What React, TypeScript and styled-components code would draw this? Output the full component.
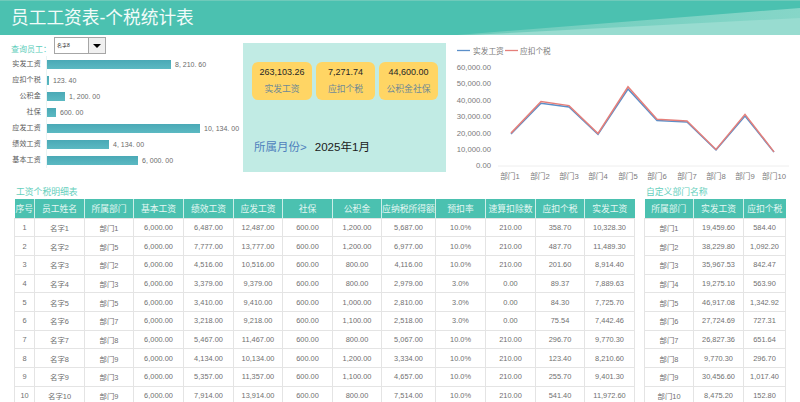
import * as React from "react";
import { createGlobalStyle, styled } from "styled-components";

const GlobalStyle = createGlobalStyle`
  html, body {
    margin: 0;
    height: 402px;
    overflow: hidden;
    background: #fff;
  }
  body {
    font-family: "Liberation Sans", "Noto Sans CJK SC", sans-serif;
  }
`;

const cjk = `"Liberation Sans", "Noto Sans CJK SC", sans-serif`;

const barRows = [
  { label: "实发工资", value: "8, 210. 60", width: 124 },
  { label: "应扣个税", value: "123. 40", width: 2 },
  { label: "公积金", value: "1, 200. 00", width: 18 },
  { label: "社保", value: "600. 00", width: 9 },
  { label: "应发工资", value: "10, 134. 00", width: 153 },
  { label: "绩效工资", value: "4, 134. 00", width: 62 },
  { label: "基本工资", value: "6, 000. 00", width: 91 },
];

const kpis = [
  { value: "263,103.26", label: "实发工资", width: 60 },
  { value: "7,271.74", label: "应扣个税", width: 59 },
  { value: "44,600.00", label: "公积金社保", width: 59 },
];

const mainColumns = [20, 50, 49, 50, 50, 49, 50, 49, 54, 50, 50, 49, 50];
const mainHead = [
  "序号", "员工姓名", "所属部门", "基本工资", "绩效工资", "应发工资", "社保",
  "公积金", "应纳税所得额", "预扣率", "速算扣除数", "应扣个税", "实发工资",
];
const mainRows = [
  ["1", "名字1", "部门1", "6,000.00", "6,487.00", "12,487.00", "600.00", "1,200.00", "5,687.00", "10.0%", "210.00", "358.70", "10,328.30"],
  ["2", "名字2", "部门5", "6,000.00", "7,777.00", "13,777.00", "600.00", "1,200.00", "6,977.00", "10.0%", "210.00", "487.70", "11,489.30"],
  ["3", "名字3", "部门2", "6,000.00", "4,516.00", "10,516.00", "600.00", "800.00", "4,116.00", "10.0%", "210.00", "201.60", "8,914.40"],
  ["4", "名字4", "部门3", "6,000.00", "3,379.00", "9,379.00", "600.00", "800.00", "2,979.00", "3.0%", "0.00", "89.37", "7,889.63"],
  ["5", "名字5", "部门5", "6,000.00", "3,410.00", "9,410.00", "600.00", "1,000.00", "2,810.00", "3.0%", "0.00", "84.30", "7,725.70"],
  ["6", "名字6", "部门7", "6,000.00", "3,218.00", "9,218.00", "600.00", "1,100.00", "2,518.00", "3.0%", "0.00", "75.54", "7,442.46"],
  ["7", "名字7", "部门8", "6,000.00", "5,467.00", "11,467.00", "600.00", "800.00", "5,067.00", "10.0%", "210.00", "296.70", "9,770.30"],
  ["8", "名字8", "部门9", "6,000.00", "4,134.00", "10,134.00", "600.00", "1,200.00", "3,334.00", "10.0%", "210.00", "123.40", "8,210.60"],
  ["9", "名字9", "部门3", "6,000.00", "5,357.00", "11,357.00", "600.00", "1,100.00", "4,657.00", "10.0%", "210.00", "255.70", "9,401.30"],
  ["10", "名字10", "部门9", "6,000.00", "7,914.00", "13,914.00", "600.00", "800.00", "7,514.00", "10.0%", "210.00", "541.40", "11,972.60"],
];

const deptColumns = [49, 50, 42];
const deptHead = ["所属部门", "实发工资", "应扣个税"];
const deptRows = [
  ["部门1", "19,459.60", "584.40"],
  ["部门2", "38,229.80", "1,092.20"],
  ["部门3", "35,967.53", "842.47"],
  ["部门4", "19,275.10", "563.90"],
  ["部门5", "46,917.08", "1,342.92"],
  ["部门6", "27,724.69", "727.31"],
  ["部门7", "26,827.36", "651.64"],
  ["部门8", "9,770.30", "296.70"],
  ["部门9", "30,456.60", "1,017.40"],
  ["部门10", "8,475.20", "152.80"],
];

const Page = styled.div`
  width: 800px;
  height: 402px;
  overflow: hidden;
  display: flex;
  flex-direction: column;
  background: #fff;
`;

const Banner = styled.header`
  position: relative;
  flex: 0 0 35px;
  box-sizing: border-box;
  display: flex;
  align-items: center;
  padding: 2px 0 0 11px;
  background: #4bc1b0;
  overflow: hidden;
`;

const BannerWedge = styled.svg`
  position: absolute;
  inset: 0;
  width: 100%;
  height: 100%;
`;

const BannerTitle = styled.h1`
  position: relative;
  margin: 0;
  font-size: 17.7px;
  font-weight: 400;
  line-height: 1;
  color: #f2fbf9;
`;

const TopRow = styled.div`
  flex: 0 0 150px;
  display: flex;
`;

const BarPanel = styled.section`
  flex: 0 0 243px;
  box-sizing: border-box;
  padding: 2px 0 0 11px;
`;

const QueryRow = styled.div`
  display: flex;
  align-items: center;
  height: 17px;
`;

const QueryLabel = styled.span`
  width: 43px;
  margin-top: 5px;
  font-size: 8px;
  color: #5ccdbb;
`;

const SelectBox = styled.div`
  width: 52px;
  height: 17px;
  display: flex;
  border: 1px solid #a6a6a6;
  box-sizing: border-box;
`;

const SelectValue = styled.span`
  flex: 1;
  padding-left: 2px;
  font-size: 5px;
  line-height: 15px;
  color: #222;
`;

const SelectButton = styled.span`
  width: 16px;
  display: flex;
  align-items: center;
  justify-content: center;
  border-left: 1px solid #a6a6a6;
  background: #f0f0f0;
`;

const SelectArrow = styled.span`
  width: 0;
  height: 0;
  border-style: solid;
  border-width: 4px 4px 0;
  border-color: #000 transparent transparent;
`;

const BarList = styled.div`
  display: grid;
  grid-template-columns: 30px 1fr;
  grid-auto-rows: 16px;
  margin-top: 2px;
`;

const BarLabel = styled.span`
  font-size: 7px;
  line-height: 16px;
  color: #595959;
  text-align: right;
  letter-spacing: 0.2px;
`;

const BarTrack = styled.div`
  display: flex;
  align-items: center;
  gap: 4px;
  margin-left: 5px;
  border-left: 1px solid #eaf4f4;
`;

const BarFill = styled.div`
  height: 9px;
  background: linear-gradient(180deg, #4aa9b6, #5bb9c2);
`;

const BarValue = styled.span`
  font-size: 7px;
  color: #6b6b6b;
  white-space: pre;
`;

const KpiPanel = styled.section`
  flex: 0 0 203px;
  height: 129px;
  margin-top: 8px;
  box-sizing: border-box;
  padding: 19px 8px 0 9px;
  display: flex;
  flex-direction: column;
  background: #c1ebe4;
`;

const KpiRow = styled.div`
  display: flex;
  gap: 4px;
`;

const KpiCard = styled.div<{ $width: number }>`
  width: ${(p) => p.$width}px;
  height: 38px;
  box-sizing: border-box;
  padding-bottom: 2px;
  border-radius: 6px;
  background: #ffd564;
  display: flex;
  flex-direction: column;
  align-items: center;
  justify-content: center;
  gap: 7px;
`;

const KpiValue = styled.span`
  font-size: 9px;
  line-height: 10px;
  color: #262626;
`;

const KpiLabel = styled.span`
  font-size: 8.8px;
  line-height: 10px;
  color: #6f8a96;
`;

const MonthRow = styled.div`
  margin-top: 38px;
  display: flex;
  align-items: center;
  gap: 8px;
  padding-left: 2px;
`;

const MonthLabel = styled.span`
  font-size: 11.5px;
  color: #4f81bd;
`;

const MonthValue = styled.span`
  font-size: 11.6px;
  color: #1a1a1a;
`;

const ChartPanel = styled.section`
  flex: 1;
  min-width: 0;
`;

const ChartSvg = styled.svg`
  display: block;
  width: 354px;
  height: 150px;
`;

const ChartText = styled.text`
  font-family: ${cjk};
  font-size: 7.7px;
  fill: #7a7a7a;
`;

const TablesRow = styled.div`
  flex: 1;
  display: flex;
  padding-left: 14px;
  min-height: 0;
`;

const TableBlock = styled.section<{ $gap?: number }>`
  margin-left: ${(p) => p.$gap ?? 0}px;
`;

const TableCaption = styled.div`
  height: 14px;
  padding-left: 2px;
  font-size: 8.8px;
  line-height: 14px;
  color: #66cfbd;
`;

const DataTable = styled.table`
  border-collapse: collapse;
  table-layout: fixed;
`;

const HeadCell = styled.th`
  height: 19px;
  padding: 0;
  box-sizing: border-box;
  border-left: 1px solid #cdeee8;
  background: #4bc1b0;
  color: #e4f7f3;
  font-size: 8.8px;
  font-weight: 400;
  text-align: center;
  white-space: nowrap;
  overflow: hidden;
  &:first-child {
    border-left: 0;
  }
`;

const BodyCell = styled.td`
  height: 18.7px;
  padding: 0;
  box-sizing: border-box;
  border: 1px solid #e4e4e4;
  color: #707070;
  font-size: 7.4px;
  text-align: center;
  white-space: nowrap;
`;

// chart drawn in panel coordinates: the panel starts at x=446, y=35
const chartX = [65, 95, 123, 152, 182, 211, 241, 270, 299, 328];
const labelX = [64, 94, 123, 152, 182, 211, 241, 270, 299, 328];
const wages = [19459.6, 38229.8, 35967.53, 19275.1, 46917.08, 27724.69, 26827.36, 9770.3, 30456.6, 8475.2];
const taxes = [584.4, 1092.2, 842.47, 563.9, 1342.92, 727.31, 651.64, 296.7, 1017.4, 152.8];
const axisZero = 131;
const axisScale = 98.4 / 60000;
const ticks = ["60,000.00", "50,000.00", "40,000.00", "30,000.00", "20,000.00", "10,000.00", "0.00"];

function toPoints(values: number[]) {
  return values.map((v, i) => `${chartX[i]},${axisZero - v * axisScale}`).join(" ");
}

function Table({ columns, head, rows }: { columns: number[]; head: string[]; rows: string[][] }) {
  return (
    <DataTable style={{ width: columns.reduce((sum, w) => sum + w, 0) }}>
      <colgroup>
        {columns.map((w, i) => (
          <col key={i} style={{ width: w }} />
        ))}
      </colgroup>
      <thead>
        <tr>
          {head.map((h) => (
            <HeadCell key={h}>{h}</HeadCell>
          ))}
        </tr>
      </thead>
      <tbody>
        {rows.map((row, r) => (
          <tr key={r}>
            {row.map((cell, c) => (
              <BodyCell key={c}>{cell}</BodyCell>
            ))}
          </tr>
        ))}
      </tbody>
    </DataTable>
  );
}

export default function App() {
  return (
    <Page>
      <GlobalStyle />
      <Banner>
        <BannerWedge viewBox="0 0 800 35" preserveAspectRatio="none">
          <defs>
            <linearGradient id="wedge" x1="0" x2="1" y1="0" y2="0">
              <stop offset="0" stopColor="#6ccbbb" />
              <stop offset="1" stopColor="#86d6c8" />
            </linearGradient>
          </defs>
          <rect x="0" y="0" width="800" height="1" fill="#6fcaba" />
          <polygon points="457,35 800,8 800,35" fill="url(#wedge)" />
          <polygon points="470,35 800,18 800,35" fill="#98dcd0" />
        </BannerWedge>
        <BannerTitle>员工工资表-个税统计表</BannerTitle>
      </Banner>
      <TopRow>
        <BarPanel>
          <QueryRow>
            <QueryLabel>查询员工：</QueryLabel>
            <SelectBox>
              <SelectValue>名字8</SelectValue>
              <SelectButton>
                <SelectArrow />
              </SelectButton>
            </SelectBox>
          </QueryRow>
          <BarList>
            {barRows.map((row) => (
              <React.Fragment key={row.label}>
                <BarLabel>{row.label}</BarLabel>
                <BarTrack>
                  <BarFill style={{ width: row.width }} />
                  <BarValue>{row.value}</BarValue>
                </BarTrack>
              </React.Fragment>
            ))}
          </BarList>
        </BarPanel>
        <KpiPanel>
          <KpiRow>
            {kpis.map((kpi) => (
              <KpiCard key={kpi.label} $width={kpi.width}>
                <KpiValue>{kpi.value}</KpiValue>
                <KpiLabel>{kpi.label}</KpiLabel>
              </KpiCard>
            ))}
          </KpiRow>
          <MonthRow>
            <MonthLabel>所属月份&gt;</MonthLabel>
            <MonthValue>2025年1月</MonthValue>
          </MonthRow>
        </KpiPanel>
        <ChartPanel>
          <ChartSvg viewBox="0 0 354 150">
            <line x1="11" x2="24" y1="15.5" y2="15.5" stroke="#5b8fc9" strokeWidth="1.3" />
            <ChartText x="27" y="18.5">实发工资</ChartText>
            <line x1="59" x2="72" y1="15.5" y2="15.5" stroke="#e57f7a" strokeWidth="1.3" />
            <ChartText x="74" y="18.5">应扣个税</ChartText>
            {ticks.map((t, i) => (
              <ChartText key={t} x="45" y={35 + i * 16.4} textAnchor="end">{t}</ChartText>
            ))}
            <line x1="52" x2="343" y1="131" y2="131" stroke="#eeeeee" />
            {labelX.map((x, i) => (
              <ChartText key={i} x={x} y="144" textAnchor="middle">{`部门${i + 1}`}</ChartText>
            ))}
            <polyline points={toPoints(wages)} fill="none" stroke="#5b8fc9" strokeWidth="1.5" />
            <polyline
              points={toPoints(wages.map((w, i) => w + taxes[i]))}
              fill="none"
              stroke="#e57f7a"
              strokeWidth="1.5"
            />
          </ChartSvg>
        </ChartPanel>
      </TopRow>
      <TablesRow>
        <TableBlock>
          <TableCaption>工资个税明细表</TableCaption>
          <Table columns={mainColumns} head={mainHead} rows={mainRows} />
        </TableBlock>
        <TableBlock $gap={9}>
          <TableCaption>自定义部门名称</TableCaption>
          <Table columns={deptColumns} head={deptHead} rows={deptRows} />
        </TableBlock>
      </TablesRow>
    </Page>
  );
}
